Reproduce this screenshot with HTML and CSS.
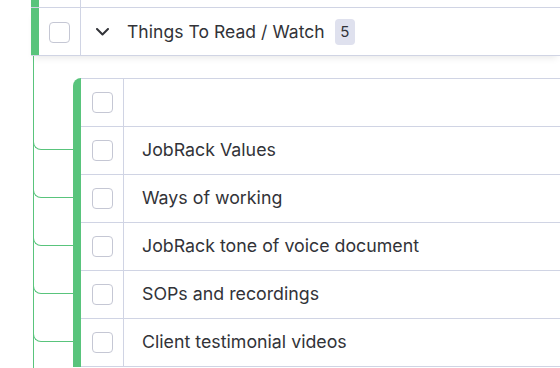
FILE: index.html
```html
<!DOCTYPE html>
<html lang="en">
<head>
    <meta charset="UTF-8">
    <meta name="viewport" content="width=device-width, initial-scale=1.0">
    <title>Things To Read / Watch</title>
    <link rel="stylesheet" href="styles.css">
</head>
<body>
<div class="board">
    <!-- end of the group above -->
    <div class="group-row prev-row">
        <div class="bar"></div>
        <div class="check-cell"></div>
        <div class="title-cell"></div>
    </div>

    <!-- Group header -->
    <div class="group-row group-header">
        <div class="bar"></div>
        <div class="check-cell"><span class="checkbox"></span></div>
        <div class="title-cell">
            <svg class="chevron" width="13" height="8" viewBox="0 0 13 8">
                <path d="M1 1 L6.5 6.5 L12 1" fill="none" stroke="#323338" stroke-width="2" stroke-linecap="round" stroke-linejoin="round"/>
            </svg>
            <span class="group-title">Things To Read / Watch</span>
            <span class="count">5</span>
        </div>
    </div>
</div>

<!-- Subitems -->
<div class="subitems">
    <div class="sub-row first">
        <div class="branch none"></div>
        <div class="sub-bar"></div>
        <div class="sub-cells">
            <div class="sub-check"><span class="checkbox small"></span></div>
            <div class="sub-name"></div>
        </div>
    </div>
    <div class="sub-row">
        <div class="branch"></div>
        <div class="sub-bar"></div>
        <div class="sub-cells">
            <div class="sub-check"><span class="checkbox small"></span></div>
            <div class="sub-name">JobRack Values</div>
        </div>
    </div>
    <div class="sub-row">
        <div class="branch"></div>
        <div class="sub-bar"></div>
        <div class="sub-cells">
            <div class="sub-check"><span class="checkbox small"></span></div>
            <div class="sub-name">Ways of working</div>
        </div>
    </div>
    <div class="sub-row">
        <div class="branch"></div>
        <div class="sub-bar"></div>
        <div class="sub-cells">
            <div class="sub-check"><span class="checkbox small"></span></div>
            <div class="sub-name">JobRack tone of voice document</div>
        </div>
    </div>
    <div class="sub-row">
        <div class="branch"></div>
        <div class="sub-bar"></div>
        <div class="sub-cells">
            <div class="sub-check"><span class="checkbox small"></span></div>
            <div class="sub-name">SOPs and recordings</div>
        </div>
    </div>
    <div class="sub-row">
        <div class="branch"></div>
        <div class="sub-bar"></div>
        <div class="sub-cells">
            <div class="sub-check"><span class="checkbox small"></span></div>
            <div class="sub-name">Client testimonial videos</div>
        </div>
    </div>
</div>
</body>
</html>
```

FILE: styles.css
```css
body {
    margin: 0;
    background: #fff;
    font-family: 'Inter', 'Roboto', sans-serif;
    color: #323338;
    overflow: hidden;
}

.board {
    margin-left: 31px;
    position: relative;
    z-index: 1;
}

.group-row {
    display: flex;
    border-bottom: 1px solid #d0d4e4;
    box-sizing: border-box;
}

.bar {
    width: 8px;
    background-color: #59c47c;
}

.check-cell {
    width: 42px;
    border-right: 1px solid #d0d4e4;
    box-sizing: border-box;
    display: flex;
    align-items: center;
    justify-content: center;
}

.title-cell {
    flex: 1;
    display: flex;
    align-items: center;
}

.prev-row {
    height: 8px;
}

/* Group header */
.group-header {
    height: 48px;
    background: #fff;
    box-shadow: 0 5px 7px -3px rgba(0, 0, 0, 0.09);
}

.checkbox {
    display: block;
    width: 21px;
    height: 21px;
    border: 1px solid #c5c7d4;
    border-radius: 4px;
    box-sizing: border-box;
    margin-top: 2px;
}

.checkbox.small {
    width: 21px;
    height: 21px;
    margin: 0;
}

.chevron {
    margin-left: 15px;
    margin-top: 1px;
}

.group-title {
    margin-left: 18px;
    font-size: 17.5px;
    letter-spacing: 0.05px;
}

.count {
    margin-left: 10px;
    background-color: #dfe1ee;
    border-radius: 4px;
    width: 20px;
    height: 26px;
    display: flex;
    align-items: center;
    justify-content: center;
    font-size: 15px;
}

/* Subitems */
.subitems {
    margin-left: 33px;
    border-left: 1px solid #59c47c;
    padding-top: 22px;
    height: 400px;
}

.sub-row {
    display: flex;
    height: 48px;
}

.branch {
    width: 40px;
    height: 23px;
    margin-left: -1px;
    border-left: 1px solid #59c47c;
    border-bottom: 1px solid #59c47c;
    border-bottom-left-radius: 8px;
    box-sizing: border-box;
}

.branch.none {
    border: none;
}

.sub-bar {
    width: 8px;
    background-color: #59c47c;
}

.sub-row.first .sub-bar {
    border-top-left-radius: 8px;
}

.sub-cells {
    flex: 1;
    display: flex;
    border-bottom: 1px solid #d0d4e4;
}

.sub-row.first .sub-cells {
    border-top: 1px solid #d0d4e4;
}

.sub-row.first {
    height: 49px;
}

.sub-check {
    width: 43px;
    border-right: 1px solid #d0d4e4;
    box-sizing: border-box;
    display: flex;
    align-items: center;
    justify-content: center;
}

.sub-name {
    flex: 1;
    display: flex;
    align-items: center;
    padding-left: 18px;
    padding-bottom: 2px;
    font-size: 17.8px;
}
```
